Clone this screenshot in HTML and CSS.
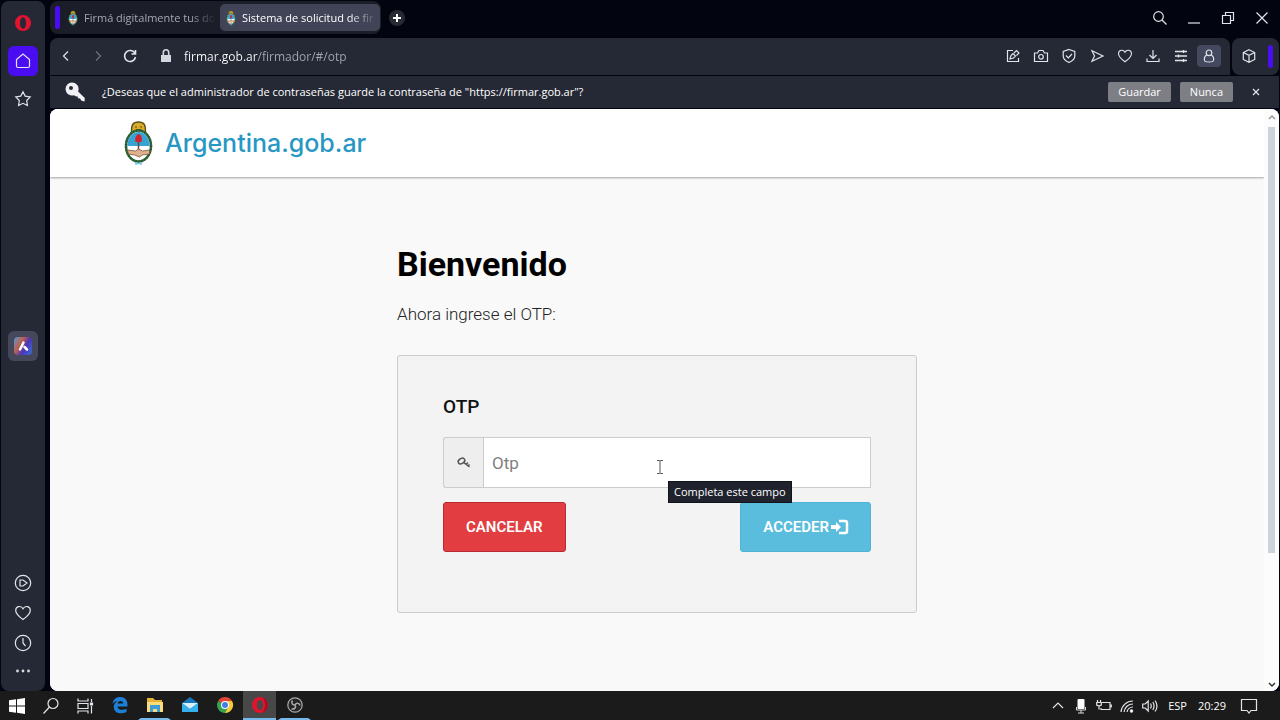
FILE: index.html
```html
<!DOCTYPE html>
<html lang="es">
<head>
    <meta charset="utf-8">
    <title>Sistema de solicitud de firma</title>
    <link rel="stylesheet" href="styles.css">
</head>
<body>
    <!-- shared shapes -->
    <svg class="defs" aria-hidden="true">
        <symbol id="escudo" viewBox="0 0 30 44">
            <path d="M8 11c0-7 1-10 7-10s7 3 7 10z" fill="#d9ad2b" stroke="#5d5320" stroke-width="1.500"/>
            <path d="M11.500 6h2M16.500 6h2M12.500 8.500h5" stroke="#6d4b10"/>
            <ellipse cx="15" cy="25" rx="12.500" ry="15.500" fill="#fff" stroke="#2f6b3c" stroke-width="2.500"/>
            <ellipse cx="15" cy="25" rx="12.500" ry="15.500" fill="none" stroke="#253a25" stroke-width="2.500" stroke-dasharray="1 2" opacity=".6"/>
            <path d="M3.800 25a11.200 14 0 0 1 22.400 0z" fill="#36a3d2"/>
            <path d="M15 19v12" stroke="#6b4a35" stroke-width="1.500"/>
            <path d="M12 21c-1-5 1-7 3-8 3 1 4 4 3 8z" fill="#d3232f"/>
            <path d="M4 29l8 1 3-2 4 2 7-1v4l-7 1-3 2-5-2-6-1z" fill="#dfb08c" stroke="#765541" stroke-width=".8"/>
            <path d="M11 41l4 1 4-1-1 3-3-1-3 1z" fill="#79cbe8"/>
        </symbol>
        <symbol id="heart" viewBox="0 0 18 18">
            <path d="M9 15.500C5 12.500 1.700 9.800 1.700 6.400 1.700 2.200 7 1 9 4.800c2-3.800 7.300-2.600 7.300 1.600 0 3.400-3.300 6.100-7.300 9.100z"/>
        </symbol>
        <symbol id="magnifier" viewBox="0 0 16 16">
            <circle cx="6.500" cy="6.500" r="4.800"/><path d="M10 10l4.500 4.500"/>
        </symbol>
    </svg>

    <div class="browser">
        <nav class="sidebar" aria-label="Barra lateral">
            <div class="side-group">
                <button class="side-btn" aria-label="Opera"><svg class="i18" viewBox="0 0 18 18"><path fill="#e0142f" fill-rule="evenodd" d="M9 1a8 8 0 1 0 0 16A8 8 0 1 0 9 1zm0 2.300c2 0 3 2.500 3 5.700s-1 5.700-3 5.700S6 12.200 6 9s1-5.700 3-5.700z"/></svg></button>
                <button class="side-btn home" aria-label="Inicio"><svg class="i18 line" viewBox="0 0 18 18"><path d="M2.500 7.500L9 2l6.500 5.500V14q0 1.500-1.500 1.500H4q-1.500 0-1.500-1.500z"/></svg></button>
                <button class="side-btn" aria-label="Favoritos"><svg class="i18 line" viewBox="0 0 18 18"><path d="M9 1.800l2.200 4.300 5 .8-3.500 3.600.7 5L9 13.300l-4.400 2.200.7-5L1.800 6.900l5-.8z"/></svg></button>
            </div>
            <button class="side-btn aria" aria-label="Aria"><span class="aria-logo"><svg class="i18" viewBox="0 0 18 18"><path d="M6 12.500l3.500-7M10.500 10l2.500 2.500" fill="none" stroke="#fff" stroke-width="2.500" stroke-linecap="round"/></svg></span></button>
            <div class="side-group bottom">
                <button class="side-btn" aria-label="Reproductor"><svg class="i18 line" viewBox="0 0 18 18"><circle cx="9" cy="9" r="7.700"/><path d="M6 6h3l4 3-4 3H6z"/></svg></button>
                <button class="side-btn" aria-label="Marcadores"><svg class="i18 line"><use href="#heart"/></svg></button>
                <button class="side-btn" aria-label="Historial"><svg class="i18 line" viewBox="0 0 18 18"><circle cx="9" cy="9" r="7.700"/><path d="M9 4v5l2.500 3"/></svg></button>
                <button class="side-btn more" aria-label="Más"><svg class="i18" viewBox="0 0 18 18" fill="#d8dae2"><circle cx="3.500" cy="9" r="1.400"/><circle cx="9" cy="9" r="1.400"/><circle cx="14.500" cy="9" r="1.400"/></svg></button>
            </div>
        </nav>

        <div class="window">
            <div class="tabstrip">
                <div class="tabs">
                    <span class="island"></span>
                    <button class="tab"><svg class="favicon"><use href="#escudo"/></svg><span class="tab-title">Firmá digitalmente tus do</span></button>
                    <button class="tab active"><svg class="favicon"><use href="#escudo"/></svg><span class="tab-title">Sistema de solicitud de fir</span></button>
                </div>
                <button class="new-tab" aria-label="Nueva pestaña"><svg class="i16" viewBox="0 0 16 16"><path d="M8 4v8M4 8h8" stroke="#fff" stroke-width="2"/></svg></button>
                <div class="win-controls">
                    <button aria-label="Buscar pestañas"><svg class="i16 line"><use href="#magnifier"/></svg></button>
                    <button aria-label="Minimizar"><svg class="i16 line" viewBox="0 0 16 16"><path d="M2 13h12"/></svg></button>
                    <button aria-label="Restaurar"><svg class="i16 line" viewBox="0 0 16 16"><path d="M2.500 5.500h8v8h-8zM5.500 5V2.500h8v8H11"/></svg></button>
                    <button aria-label="Cerrar"><svg class="i16 line" viewBox="0 0 16 16"><path d="M2.500 2.500l11 11m0-11l-11 11"/></svg></button>
                </div>
            </div>

            <div class="toolbar-row">
                <div class="toolbar">
                    <button class="nav-btn" aria-label="Atrás"><svg class="i16 line" viewBox="0 0 16 16"><path d="M10 3.500L5.500 8l4.500 4.500"/></svg></button>
                    <button class="nav-btn off" aria-label="Adelante"><svg class="i16 line" viewBox="0 0 16 16"><path d="M6 3.500L10.500 8 6 12.500"/></svg></button>
                    <button class="nav-btn" aria-label="Recargar"><svg class="i16 line" viewBox="0 0 16 16"><path d="M13 5.500A5.500 5.500 0 1 0 13.500 9M13.500 2v4h-4" stroke-width="1.600"/></svg></button>
                    <svg class="i16 lock" viewBox="0 0 16 16"><path d="M3 7h10v7H3z" fill="#d5d7de"/><path d="M5.300 7V4.500a2.700 2.700 0 0 1 5.400 0V7" fill="none" stroke="#d5d7de" stroke-width="1.600"/></svg>
                    <input class="address" type="text" value="firmar.gob.ar/firmador/#/otp" aria-label="Dirección">
                    <div class="actions">
                        <button aria-label="Editar"><svg class="i16 line" viewBox="0 0 16 16"><path d="M8 2.500H2.500v11h11V10M5 11l1-3.500 2-2 2.500 2.500-2 2zM9 5l2.500-2.500 2.500 2.500L11.500 7.500"/></svg></button>
                        <button aria-label="Captura"><svg class="i16 line" viewBox="0 0 16 16"><path d="M1.500 5h3L6 2.500h4L11.500 5h3v8.500h-13z"/><circle cx="8" cy="8.800" r="2.300"/></svg></button>
                        <button aria-label="Protección"><svg class="i16 line" viewBox="0 0 16 16"><path d="M8 1.500l5.800 2v4.500c0 3-2.500 5-5.800 6.500-3.300-1.500-5.800-3.500-5.800-6.500V3.500zM5 7.500l2.300 2.300L11 6"/></svg></button>
                        <button aria-label="Enviar"><svg class="i16 line" viewBox="0 0 16 16"><path d="M3 2.800L14 8 3 13.200 5.500 8z"/></svg></button>
                        <button aria-label="Guardar página"><svg class="i16 line"><use href="#heart"/></svg></button>
                        <button aria-label="Descargas"><svg class="i16 line" viewBox="0 0 16 16"><path d="M8 2v8M4.500 7L8 10.500 11.500 7M2 10.500v3h12v-3"/></svg></button>
                        <button aria-label="Configuración"><svg class="i16 line" viewBox="0 0 16 16"><path d="M2 3.500h12M2 8h12M2 12.500h12M10.500 2v3M5.500 6.500v3M10.500 11v3" stroke-width="1.400"/></svg></button>
                        <button class="profile" aria-label="Perfil"><svg class="i16 line" viewBox="0 0 16 16"><circle cx="8" cy="4.800" r="2.800"/><path d="M5.800 7C3 8.500 3 10 3.500 12.500q.3 1.500 4.500 1.500t4.500-1.500C13 10 13 8.500 10.200 7"/></svg></button>
                    </div>
                </div>
                <div class="extensions">
                    <button aria-label="Extensiones"><svg class="i16 line" viewBox="0 0 16 16"><path d="M8 1.700l5.700 2.800v7L8 14.300l-5.700-2.800v-7zM2.300 4.500L8 7.300l5.700-2.800M8 7.300v7"/></svg></button>
                    <span class="island"></span>
                </div>
            </div>

            <div class="prompt">
                <svg class="key" viewBox="0 0 20 20"><path fill="#f1f1f5" fill-rule="evenodd" d="M7 .5a6.500 6.500 0 1 0 2 12.700l2 1.300 1.500-.2.500 2 2 .2 1.500 2.300 3 .7.300-3.500-6.700-6.500A6.500 6.500 0 0 0 7 .5zM6 4a2 2 0 1 1 0 4 2 2 0 0 1 0-4z"/></svg>
                <p>¿Deseas que el administrador de contraseñas guarde la contraseña de "https://firmar.gob.ar"?</p>
                <button class="prompt-btn">Guardar</button>
                <button class="prompt-btn">Nunca</button>
                <button class="prompt-close" aria-label="Cerrar aviso"><svg class="i16 line" viewBox="0 0 16 16"><path d="M5 5l6 6m0-6l-6 6"/></svg></button>
            </div>

            <div class="viewport">
                <div class="page">
                    <header class="site-header">
                        <a class="brand" href="#"><svg class="brand-logo"><use href="#escudo"/></svg>Argentina.gob.ar</a>
                    </header>
                    <main class="content">
                        <h1>Bienvenido</h1>
                        <p class="lead">Ahora ingrese el OTP:</p>
                        <form class="well">
                            <label for="otp">OTP</label>
                            <div class="input-group">
                                <span class="addon"><svg class="i16" viewBox="0 0 16 16"><g fill="none" stroke="#555" stroke-width="1.500"><ellipse cx="5.500" cy="6" rx="3.500" ry="2.500" transform="rotate(-30 5.500 6)"/><path d="M7 7l6.500 5M10 9.500l2-2M12 11l1.500-1.500"/></g></svg></span>
                                <input id="otp" type="text" placeholder="Otp">
                                <svg class="cursor" viewBox="0 0 8 16"><path d="M1 1.500h2.500l.5.500.5-.5H7M4 2v12M1 14.500h2.500l.5-.5.5.5H7" fill="none" stroke="#555"/></svg>
                                <span class="tooltip" role="tooltip">Completa este campo</span>
                            </div>
                            <div class="buttons">
                                <button type="button" class="btn danger">CANCELAR</button>
                                <button type="button" class="btn info">ACCEDER <svg class="login" viewBox="0 0 18 16"><path d="M0 6h5V3l5 5-5 5v-3H0z" fill="#fff"/><path d="M8 2h6q2 0 2 2v8q0 2-2 2H8" fill="none" stroke="#fff" stroke-width="2.500"/></svg></button>
                            </div>
                        </form>
                    </main>
                </div>
                <div class="scrollbar">
                    <svg class="arrow" viewBox="0 0 10 10"><path d="M2 7l3-3 3 3" fill="none" stroke="#999" stroke-width="1.500"/></svg>
                    <div class="track"><div class="thumb"></div></div>
                    <svg class="arrow" viewBox="0 0 10 10"><path d="M2 3l3 3 3-3" fill="none" stroke="#333" stroke-width="1.500"/></svg>
                </div>
            </div>
        </div>
    </div>

    <footer class="taskbar">
        <div class="system">
            <button aria-label="Inicio de Windows"><svg class="i18" viewBox="0 0 18 18" fill="#fff"><path d="M1 3.300l7-1v6.200H1zM9 2.200L17 1v7.500H9zM1 9.500h7v6.200l-7-1zM9 9.500h8V17l-8-1.200z"/></svg></button>
            <button aria-label="Buscar"><svg class="i18 line" viewBox="0 0 18 18"><circle cx="11" cy="6.500" r="5"/><path d="M7.500 10L1.500 16.500"/></svg></button>
            <button aria-label="Vista de tareas"><svg class="i18 line" viewBox="0 0 18 18"><path d="M2 1.500V4h10V1.500M2 6.500h10v5H2zM2 16.500V14h10v2.500M15.500 2v3M15.500 9v7.500"/><path d="M14.500 6h2v2h-2z" fill="#fff"/></svg></button>
        </div>
        <div class="apps">
            <button aria-label="Edge"><svg class="i18" viewBox="0 0 18 18"><path fill="#1e7fd6" d="M1.500 8C2 3.500 5 1 9.200 1 14 1 16.500 4.500 16.500 8.500V10.500H6.500c.2 3.500 5 4.300 9 2.200v3.300C9 19 2.500 16.500 2.800 10.500 3 8 4.500 6 6.500 5 4.500 5.300 2.700 6.300 1.500 8zM6.600 7.500h5.600C12.200 4 7 4 6.600 7.500z"/></svg></button>
            <button class="running" aria-label="Explorador"><svg class="i18" viewBox="0 0 18 18"><path d="M1 2h6l2 2h7v12H1z" fill="#e8b33a"/><path d="M1 6h16v10H1z" fill="#fbdc78"/><path d="M4 16V9h10v7h-3v-3H7v3z" fill="#3d9dd8"/></svg></button>
            <button aria-label="Correo"><svg class="i18" viewBox="0 0 18 18"><path d="M1 7l8-6 8 6v9H1z" fill="#1677bd"/><path d="M1 7h16l-8 6z" fill="#d9f0fc"/><path d="M1 7l8 6 8-6v9H1z" fill="#36b1ed"/></svg></button>
            <button aria-label="Chrome"><svg class="i18" viewBox="0 0 18 18"><path d="M9 9L2.100 5A8 8 0 0 1 16 5H9z" fill="#e44436"/><path d="M9 9V5h7A8 8 0 0 1 9 17z" fill="#f7cb37"/><path d="M9 9l3.500 2L9 17A8 8 0 0 1 2.100 5z" fill="#35a251"/><circle cx="9" cy="9" r="4" fill="#fff"/><circle cx="9" cy="9" r="3" fill="#427de8"/></svg></button>
            <button class="running current" aria-label="Opera GX"><svg class="i18" viewBox="0 0 18 18"><path fill="#e0142f" fill-rule="evenodd" d="M9 1a8 8 0 1 0 0 16A8 8 0 1 0 9 1zm0 3c2 0 3 2.300 3 5s-1 5-3 5-3-2.300-3-5 1-5 3-5z"/><path d="M11 1.300a8 8 0 0 1 0 15.400c2-2 3-4 3-7.700s-1-5.700-3-7.700z" fill="#a50e24"/></svg></button>
            <button class="running" aria-label="OBS"><svg class="i18" viewBox="0 0 18 18" fill="none" stroke="#aaa" stroke-width="1.200"><circle cx="9" cy="9" r="7.200" fill="#252525"/><path d="M9 9C6 9 5 7 6.500 4.500M9 9c1.500-2.500 4.500-2 5 .5M9 9c1.500 2.500-.5 4.500-3.500 4" stroke-width="1.500"/></svg></button>
        </div>
        <div class="tray">
            <button aria-label="Iconos ocultos"><svg class="i16 line" viewBox="0 0 16 16"><path d="M3 10l5-5 5 5"/></svg></button>
            <button aria-label="Micrófono"><svg class="i16" viewBox="0 0 16 16"><rect x="4.500" y="1" width="7" height="10" rx="1" fill="#fff"/><path d="M3.500 9v3h9V9M8 12v3M5 15h6" fill="none" stroke="#ddd"/></svg></button>
            <button aria-label="Batería"><svg class="i16 line" viewBox="0 0 16 16"><path d="M6 4.500h8v7H5V10M15.300 6.500v3M1.500 2v2M4.500 2v2M.700 4.500h4.600V7L3 8 .700 7zM3 8v3.500"/></svg></button>
            <button aria-label="Wi-Fi"><svg class="i16 line" viewBox="0 0 16 16"><path d="M2 14A12 12 0 0 1 14 3M5 14a9 9 0 0 1 9-8M8 14a6 6 0 0 1 6-5"/><circle cx="12.500" cy="13" r="1.200" fill="#fff"/></svg></button>
            <button aria-label="Volumen"><svg class="i16 line" viewBox="0 0 16 16"><path d="M.700 6h2.500l3-3v10l-3-3H.700zM8.500 5.500q1.500 2.500 0 5M10.800 4q2.500 4 0 8M13 2.500q4 5.500 0 11"/></svg></button>
            <button class="lang">ESP</button>
            <button class="clock">20:29</button>
            <button class="notify" aria-label="Notificaciones"><svg class="i18 line" viewBox="0 0 18 18"><path d="M1.500 2.500h15v11H11L9 16l-2-2.500H1.500z"/></svg></button>
        </div>
    </footer>
</body>
</html>
```
FILE: styles.css
```css
* {
    box-sizing: border-box;
}
body {
    margin: 0;
    height: 100vh;
    display: flex;
    flex-direction: column;
    overflow: hidden;
    background: #02040f;
    color: #fff;
    font-family: "Open Sans", "Noto Sans", sans-serif;
    font-size: 11px;
}
button {
    display: flex;
    align-items: center;
    justify-content: center;
    padding: 0;
    border: 0;
    background: none;
    color: inherit;
    font: inherit;
}
svg {
    display: block;
    flex: none;
}
.defs {
    position: absolute;
    width: 0;
    height: 0;
}
.i16 {
    width: 16px;
    height: 16px;
}
.i18 {
    width: 18px;
    height: 18px;
}
.line {
    fill: none;
    stroke: #e2e4ea;
    stroke-width: 1.2;
}

/* browser frame */
.browser {
    flex: 1;
    min-height: 0;
    display: flex;
    gap: 5px;
    padding: 1px 1px 0;
}
.sidebar {
    width: 44px;
    display: grid;
    grid-template-rows: 1fr auto 1fr;
    justify-items: center;
    padding: 7px 0 7px;
    border-radius: 8px;
    background: #252935;
}
.side-group {
    display: flex;
    flex-direction: column;
    gap: 8px;
}
.side-group.bottom {
    align-self: end;
    gap: 0;
}
.side-btn {
    width: 30px;
    height: 30px;
    border-radius: 6px;
}
.side-btn.more {
    height: 26px;
}
.home {
    background: #4a0df2;
}
.aria {
    background: #45485a;
}
.aria-logo {
    border-radius: 4px;
    background: linear-gradient(120deg, #4f9bd8, #c0604f 35%, #4a35b5 60%, #3b70d8);
}
.window {
    flex: 1;
    min-width: 0;
    display: flex;
    flex-direction: column;
}
.tabstrip {
    display: flex;
    align-items: center;
    height: 37px;
    padding-bottom: 4px;
}
.tabs {
    display: flex;
    align-items: center;
    height: 33px;
    padding: 0 1px 0 5px;
    border-radius: 8px;
    background: #1b1e29;
}
.island {
    width: 5px;
    height: 23px;
    border-radius: 3px;
    background: #4a0df2;
}
.tab {
    width: 160px;
    height: 27px;
    padding: 0 4px 0 8px;
    justify-content: flex-start;
    gap: 6px;
    border-radius: 5px;
    color: #a5a8b3;
}
.tab.active {
    padding-left: 6px;
    background: #414457;
    color: #fff;
}
.favicon {
    width: 10px;
    height: 16px;
}
.tab-title {
    flex: 1;
    white-space: nowrap;
    text-align: left;
    mask-image: linear-gradient(to right, #000 80%, transparent);
}
.new-tab {
    margin-left: 8px;
    border-radius: 50%;
    background: #282a33;
}
.win-controls {
    display: flex;
    gap: 18px;
    margin-left: auto;
    padding-right: 9px;
}
.toolbar-row {
    display: flex;
    gap: 2px;
    height: 37px;
}
.toolbar {
    flex: 1;
    min-width: 0;
    display: flex;
    align-items: center;
    padding: 0 9px 1px 8px;
    border-radius: 8px 8px 0 0;
    background: #252935;
}
.nav-btn {
    width: 16px;
    margin-right: 16px;
}
.nav-btn.off {
    opacity: .4;
}
.lock {
    margin: 0 10px 0 4px;
}
.address {
    flex: 1;
    min-width: 0;
    padding: 0;
    border: 0;
    outline: 0;
    font: 12px "Open Sans", "Noto Sans", sans-serif;
    /* host in white, path dimmed */
    color: transparent;
    background: linear-gradient(to right, #fff 74px, #a5a8b3 74px);
    background-clip: text;
}
.actions {
    display: flex;
    gap: 4px;
}
.actions button {
    width: 24px;
    height: 22px;
    border-radius: 4px;
}
.actions .profile {
    background: #45495f;
}
.extensions {
    display: flex;
    align-items: center;
    gap: 11px;
    padding: 0 6px 1px 9px;
    border-radius: 8px;
    background: #252935;
}
.prompt {
    display: flex;
    align-items: center;
    height: 32px;
    margin: 1px 0;
    padding: 0 15px 1px;
    background: #252935;
}
.key {
    width: 20px;
    height: 20px;
    margin-right: 17px;
}
.prompt p {
    flex: 1;
    margin: 0;
}
.prompt-btn {
    height: 20px;
    margin-left: 9px;
    padding: 0 10px;
    border-radius: 2px;
    background: #7e7f85;
}
.prompt-close {
    margin-left: 15px;
}

/* web page */
.viewport {
    flex: 1;
    min-height: 0;
    display: flex;
    overflow: hidden;
    border-radius: 8px;
    background: #fff;
}
.page {
    flex: 1;
    min-width: 0;
    background: #f9f9f9;
    color: #111;
    font-family: Roboto, sans-serif;
}
.site-header {
    display: flex;
    align-items: center;
    height: 68px;
    padding: 0 0 1px 73px;
    background: #fff;
    box-shadow: 0 1px 2px rgba(0, 0, 0, .35);
}
.brand {
    display: flex;
    align-items: center;
    gap: 11px;
    color: #2897c3;
    font: 500 25px Inter, sans-serif;
    text-decoration: none;
}
.brand-logo {
    width: 31px;
    height: 44px;
}
.content {
    width: 520px;
    max-width: 100%;
    margin: 0 auto;
    padding-top: 66px;
}
h1 {
    margin: 0 0 17px;
    color: #000;
    font-size: 34px;
    font-weight: 700;
    line-height: 42px;
}
.lead {
    margin: 0 0 29px;
    color: #222;
    font-size: 17px;
    font-weight: 300;
    line-height: 24px;
}
.well {
    padding: 39px 45px 60px;
    border: 1px solid #ccc;
    border-radius: 3px;
    background: #f3f3f3;
}
.well label {
    display: block;
    margin-bottom: 18px;
    font-size: 19px;
    font-weight: 500;
    line-height: 24px;
}
.input-group {
    position: relative;
    display: flex;
    height: 51px;
    margin-bottom: 14px;
}
.addon {
    display: flex;
    align-items: center;
    justify-content: center;
    width: 40px;
    border: 1px solid #ccc;
    border-right: 0;
    border-radius: 3px 0 0 3px;
    background: #eee;
}
.input-group input {
    flex: 1;
    min-width: 0;
    padding: 0 8px;
    border: 1px solid #ccc;
    outline: 0;
    background: #fff;
    font: 17px Roboto, sans-serif;
}
.input-group input::placeholder {
    color: #808080;
}
.cursor {
    position: absolute;
    left: 213px;
    top: 22px;
    width: 8px;
    height: 16px;
}
.tooltip {
    position: absolute;
    left: 225px;
    top: 44px;
    padding: 0 5px;
    border: 1px solid #111319;
    background: #20232d;
    color: #fff;
    font: 11px/20px "Open Sans", "Noto Sans", sans-serif;
    white-space: nowrap;
}
.buttons {
    display: flex;
    justify-content: space-between;
}
.btn {
    height: 50px;
    padding: 0 22px;
    border: 1px solid #b92b31;
    border-radius: 3px;
    color: #fff;
    font-size: 15px;
    font-weight: 600;
}
.danger {
    background: #e23d40;
}
.info {
    gap: 2px;
    padding-right: 21px;
    border-color: #4db4d5;
    background: #5bbddd;
}
.login {
    width: 18px;
    height: 16px;
}
.scrollbar {
    display: flex;
    flex-direction: column;
    align-items: center;
    width: 15px;
    padding: 3px 0 1px;
    background: #fcfcfc;
}
.arrow {
    width: 10px;
    height: 10px;
}
.track {
    flex: 1;
    width: 7px;
    padding-top: 5px;
}
.thumb {
    height: 77%;
    background: #cbd4dc;
}

/* windows taskbar */
.taskbar {
    display: flex;
    height: 29px;
    background: #1b1b1b;
}
.system,
.apps {
    display: flex;
}
.system button {
    width: 34px;
}
.apps {
    gap: 2px;
    margin-left: 1px;
}
.apps button {
    width: 33px;
    border-bottom: 2px solid transparent;
}
.apps .running {
    border-color: #76b9ed;
    border-left: 3px solid transparent;
    border-right: 3px solid transparent;
}
.apps .current {
    border-left: 0;
    border-right: 0;
    background: #484848;
}
.tray {
    display: flex;
    align-items: center;
    gap: 7px;
    margin-left: auto;
    padding-right: 22px;
}
.lang {
    margin-left: 3px;
}
.clock {
    margin-left: 4px;
}
.notify {
    margin-left: 7px;
}
```
